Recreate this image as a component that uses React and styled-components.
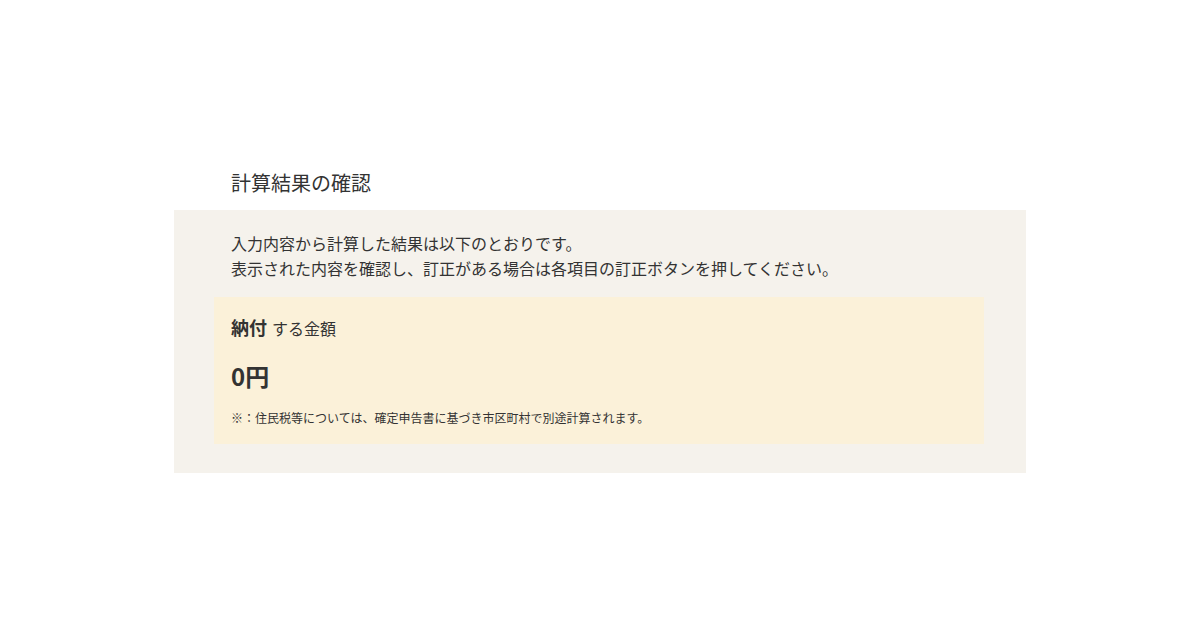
import React from 'react';
import styled, { createGlobalStyle } from 'styled-components';

const GlobalStyle = createGlobalStyle`
  html, body {
    margin: 0;
    padding: 0;
    background: #ffffff;
  }
  body {
    font-family: "Noto Sans CJK JP", "Noto Sans", sans-serif;
    color: #333333;
  }
`;

const Page = styled.div`
  width: 852px;
  margin: 0 auto;
  padding-top: 168px;
`;

const Title = styled.h2`
  margin: 0 0 12px;
  padding-left: 57px;
  font-size: 20px;
  line-height: 30px;
  font-weight: 400;
  color: #333;
`;

const Panel = styled.section`
  background: #f5f2ec;
  padding: 21px 42px 29px 40px;
`;

const Lead = styled.p`
  margin: 0 0 16px 17px;
  font-size: 16px;
  line-height: 25px;
`;

const ResultBox = styled.div`
  background: #fbf1d9;
  padding: 16px 17px 17px;
`;

const Heading = styled.div`
  font-size: 16px;
  line-height: 28px;
  margin-bottom: 16px;
`;

const Strong = styled.strong`
  font-size: 18px;
  font-weight: 700;
  margin-right: 5px;
`;

const Amount = styled.div`
  font-size: 24px;
  line-height: 36px;
  font-weight: 700;
  margin-bottom: 15px;
`;

const Note = styled.p`
  margin: 0;
  font-size: 12px;
  line-height: 18px;
`;

export default function App() {
  return (
    <>
      <GlobalStyle />
      <Page>
        <Title>計算結果の確認</Title>
        <Panel>
          <Lead>
            入力内容から計算した結果は以下のとおりです。
            <br />
            表示された内容を確認し、訂正がある場合は各項目の訂正ボタンを押してください。
          </Lead>
          <ResultBox>
            <Heading>
              <Strong>納付</Strong>する金額
            </Heading>
            <Amount>0円</Amount>
            <Note>※：住民税等については、確定申告書に基づき市区町村で別途計算されます。</Note>
          </ResultBox>
        </Panel>
      </Page>
    </>
  );
}
